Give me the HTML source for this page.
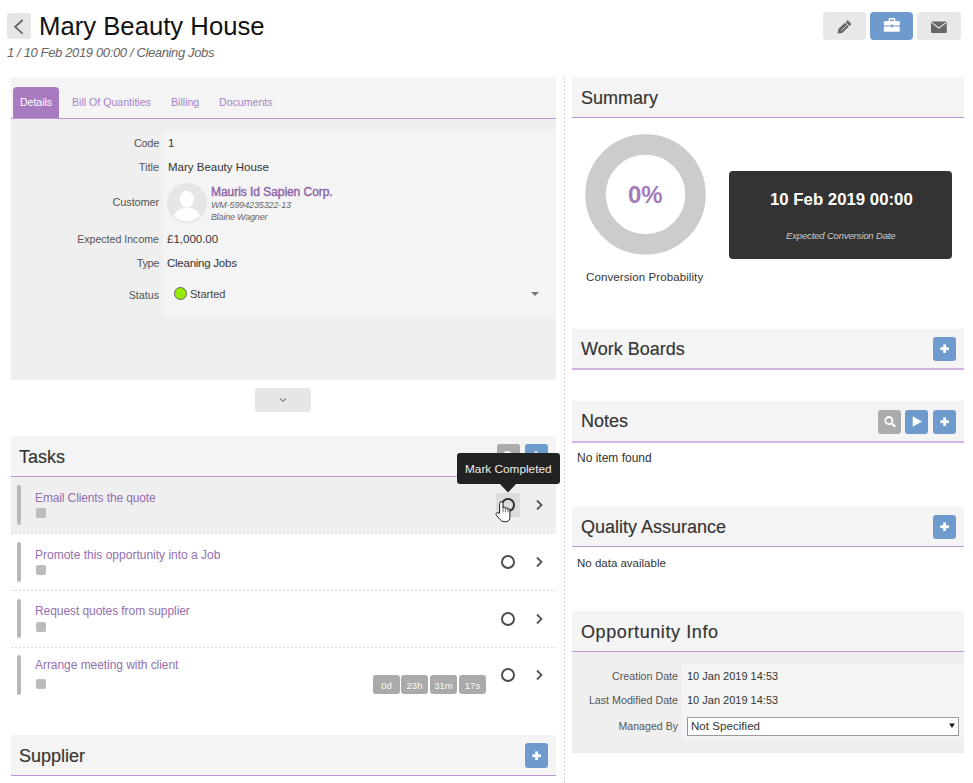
<!DOCTYPE html>
<html><head><meta charset="utf-8">
<style>
*{box-sizing:border-box;margin:0;padding:0}
html,body{width:973px;height:783px;overflow:hidden;background:#fff;font-family:"Liberation Sans",sans-serif;color:#333}
.a{position:absolute}
.t{position:absolute;white-space:nowrap;line-height:1}
.btn{position:absolute;border-radius:4px;background:#e8e8e8}
.blue{background:#6f9acd}
.gray{background:#ababab}
.hb{position:absolute;background:#f4f4f4}
.ul{position:absolute;height:1px;background:#bd95d3}
.ht{font-size:18px;color:#333;-webkit-text-stroke:0.15px #333}
.lbl{font-size:11px;color:#555;text-align:right}
.val{font-size:11.5px;color:#333}
.task{font-size:12px;color:#936eb0}
.bar{position:absolute;left:17px;width:4px;background:#b9b9b9;border-radius:2px}
.sq{position:absolute;left:36px;width:10px;height:10px;background:#bbb;border-radius:2px}
.sep{position:absolute;left:11px;width:545px;height:1px;background:repeating-linear-gradient(90deg,#d8d8d8 0 2px,transparent 2px 4px)}
.circ{position:absolute;width:14px;height:14px;border:2px solid #4e4e4e;border-radius:50%}
.badge{position:absolute;top:675px;height:19px;width:27px;background:#aaa;border-radius:3px;color:#fafafa;font-size:9.5px;text-align:center;line-height:21px}
</style></head><body>

<!-- header -->
<div class="btn" style="left:7px;top:13px;width:24px;height:26px;border-radius:3px;background:#e6e6e6"></div>
<svg class="a" style="left:7px;top:13px" width="24" height="26"><path d="M15.6 7 L8.2 13.8 L15.6 20.6" fill="none" stroke="#666" stroke-width="1.8"/></svg>
<div class="t" style="left:39px;top:14px;font-size:25.7px;color:#111">Mary Beauty House</div>
<div class="t" style="left:7px;top:46px;font-size:13px;font-style:italic;color:#666;letter-spacing:-0.36px">1 / 10 Feb 2019 00:00 / Cleaning Jobs</div>

<div class="btn" style="left:823px;top:12px;width:43px;height:28px"></div>
<svg class="a" style="left:823px;top:12px" width="43" height="28"><g transform="translate(14.6,21.4) rotate(-43)"><path d="M0 0 L3.6 -2.8 L12.6 -2.8 L12.6 2.8 L3.6 2.8 Z" fill="#666"/><rect x="13.5" y="-2.8" width="3" height="5.6" rx="0.6" fill="#666"/><line x1="4.2" y1="0.4" x2="12" y2="0.4" stroke="#e8e8e8" stroke-width="0.7"/></g></svg>
<div class="btn blue" style="left:870px;top:12px;width:43px;height:28px"></div>
<svg class="a" style="left:870px;top:12px" width="43" height="28"><path d="M18.6 9 L18.6 7 Q18.6 6 19.6 6 L24.2 6 Q25.2 6 25.2 7 L25.2 9 L23.8 9 L23.8 7.4 L20 7.4 L20 9 Z" fill="#fff"/><rect x="13.8" y="9" width="16" height="4.6" rx="1" fill="#fff"/><rect x="13.8" y="14.6" width="16" height="5.2" rx="0.8" fill="#fff"/><rect x="20.8" y="12.6" width="2.2" height="2.6" fill="#6f9acd"/></svg>
<div class="btn" style="left:917px;top:12px;width:44px;height:28px"></div>
<svg class="a" style="left:917px;top:12px" width="44" height="28"><rect x="14" y="9.4" width="15.8" height="11.6" rx="1.2" fill="#666"/><path d="M14.4 10.4 L21.9 16 L29.4 10.4" fill="none" stroke="#e8e8e8" stroke-width="1.1"/></svg>

<!-- left details panel -->
<div class="a" style="left:11px;top:77px;width:545px;height:303px;background:#efefef"></div>
<div class="a" style="left:11px;top:77px;width:545px;height:41px;background:#f4f4f4"></div>
<div class="ul" style="left:11px;top:118px;width:545px"></div>
<div class="a" style="left:13px;top:87px;width:46px;height:31px;background:#a87bc0;border-radius:4px 4px 0 0"></div>
<div class="t" style="left:20px;top:97px;font-size:10.5px;color:#fff">Details</div>
<div class="t" style="left:72px;top:97px;font-size:10.6px;color:#a683c6">Bill Of Quantities</div>
<div class="t" style="left:171px;top:97px;font-size:10.6px;color:#a683c6">Billing</div>
<div class="t" style="left:219px;top:97px;font-size:10.6px;color:#a683c6">Documents</div>

<div class="a" style="left:163px;top:131px;width:393px;height:186px;background:#f4f4f4"></div>
<div class="t lbl" style="left:0;width:159px;top:138px;letter-spacing:-0.3px">Code</div>
<div class="t lbl" style="left:0;width:159px;top:162px">Title</div>
<div class="t lbl" style="left:0;width:159px;top:197px;letter-spacing:-0.15px">Customer</div>
<div class="t lbl" style="left:0;width:159px;top:234px;font-size:10.6px">Expected Income</div>
<div class="t lbl" style="left:0;width:159px;top:258px;letter-spacing:-0.4px">Type</div>
<div class="t lbl" style="left:0;width:159px;top:290px;font-size:10.7px">Status</div>

<div class="t val" style="left:168px;top:138px">1</div>
<div class="t val" style="left:168px;top:162px">Mary Beauty House</div>
<div class="a" style="left:167px;top:183px;width:40px;height:40px;border-radius:50%;background:#e6e6e6"></div>
<svg class="a" style="left:167px;top:183px" width="40" height="40"><ellipse cx="19.8" cy="16.2" rx="7" ry="8.4" fill="#fff"/><path d="M6.5 32.8 Q10.5 24.8 19.8 24.8 Q29.5 24.8 33.2 32.8 Q27.5 38.5 19.8 38.5 Q12 38.5 6.5 32.8Z" fill="#fff"/></svg>
<div class="t" style="left:211px;top:186px;font-size:12px;color:#8d64a8;-webkit-text-stroke:0.4px #8d64a8;letter-spacing:-0.05px">Mauris Id Sapien Corp.</div>
<div class="t" style="left:211px;top:201px;font-size:9px;font-style:italic;color:#666;letter-spacing:-0.13px">WM-5994235322-13</div>
<div class="t" style="left:211px;top:213px;font-size:9px;font-style:italic;color:#666;letter-spacing:-0.2px">Blaine Wagner</div>
<div class="t val" style="left:167px;top:234px">£1,000.00</div>
<div class="t val" style="left:167px;top:258px;letter-spacing:-0.25px">Cleaning Jobs</div>
<div class="a" style="left:174px;top:287px;width:13px;height:13px;border-radius:50%;background:#98e80a;border:1px solid #666"></div>
<div class="t" style="left:190px;top:289px;font-size:11px;color:#444">Started</div>
<svg class="a" style="left:531px;top:292px" width="9" height="5"><path d="M0 0 L8 0 L4 4Z" fill="#777"/></svg>
<div class="a" style="left:11px;top:330px;width:545px;height:1px;background:#ececec"></div>
<div class="a" style="left:11px;top:355px;width:545px;height:1px;background:#ececec"></div>

<div class="btn" style="left:255px;top:388px;width:56px;height:24px;border-radius:3px;background:#e6e6e6"></div>
<svg class="a" style="left:279px;top:397px" width="8" height="6"><path d="M1 1.5 L4 4.2 L7 1.5" fill="none" stroke="#888" stroke-width="1.1"/></svg>

<!-- tasks -->
<div class="hb" style="left:11px;top:436px;width:545px;height:40px"></div>
<div class="ul" style="left:11px;top:476px;width:545px"></div>
<div class="t ht" style="left:19px;top:448px">Tasks</div>
<div class="btn gray" style="left:497px;top:444px;width:23px;height:24px;border-radius:3px"></div>
<div class="btn blue" style="left:525px;top:444px;width:23px;height:24px;border-radius:3px"></div>

<div class="a" style="left:11px;top:477px;width:545px;height:56px;background:#efefef"></div>
<div class="sep" style="top:533px"></div>
<div class="sep" style="top:590px"></div>
<div class="sep" style="top:647px"></div>

<div class="bar" style="top:485px;height:40px"></div>
<div class="t task" style="left:35px;top:492px;letter-spacing:-0.12px">Email Clients the quote</div>
<div class="sq" style="top:508px"></div>
<div class="bar" style="top:542px;height:40px"></div>
<div class="t task" style="left:35px;top:549px">Promote this opportunity into a Job</div>
<div class="sq" style="top:565px"></div>
<div class="bar" style="top:599px;height:39px"></div>
<div class="t task" style="left:35px;top:605px;letter-spacing:-0.07px">Request quotes from supplier</div>
<div class="sq" style="top:622px"></div>
<div class="bar" style="top:655px;height:40px"></div>
<div class="t task" style="left:35px;top:659px;letter-spacing:-0.05px">Arrange meeting with client</div>
<div class="sq" style="top:679px"></div>

<div class="a" style="left:496px;top:493px;width:24px;height:24px;background:#dcdcdc"></div>
<div class="circ" style="left:501px;top:498px;border-color:#333;width:13.5px;height:13.5px"></div>
<div class="circ" style="left:501px;top:555px"></div>
<div class="circ" style="left:501px;top:612px"></div>
<div class="circ" style="left:501px;top:668px"></div>
<svg class="a" style="left:535px;top:499px" width="10" height="12"><path d="M2 1.5 L6.5 6 L2 10.5" fill="none" stroke="#555" stroke-width="1.8"/></svg>
<svg class="a" style="left:535px;top:556px" width="10" height="12"><path d="M2 1.5 L6.5 6 L2 10.5" fill="none" stroke="#555" stroke-width="1.8"/></svg>
<svg class="a" style="left:535px;top:613px" width="10" height="12"><path d="M2 1.5 L6.5 6 L2 10.5" fill="none" stroke="#555" stroke-width="1.8"/></svg>
<svg class="a" style="left:535px;top:669px" width="10" height="12"><path d="M2 1.5 L6.5 6 L2 10.5" fill="none" stroke="#555" stroke-width="1.8"/></svg>
<svg class="a" style="left:495px;top:501px" width="18" height="23"><path d="M4.6 12.2 L4.6 2.5 Q4.6 0.8 6.3 0.8 Q8 0.8 8 2.5 L8 7.2 Q8.2 6.2 9.2 6.2 Q10.4 6.2 10.4 7.4 L10.4 7.8 Q10.6 6.9 11.7 6.9 Q12.8 6.9 12.9 8 L12.9 8.6 Q13.1 7.8 14 7.8 Q14.9 7.8 14.9 9 L14.9 16.5 Q14.9 19.5 12.5 20.4 Q10 21.1 8 20.5 Q6.5 20.1 5.2 18.6 L1.3 14.2 Q0.5 13.2 1.2 12.3 Q2 11.4 3.2 12 Z" fill="#fff" stroke="#1e1e1e" stroke-width="1"/><path d="M8 7.5 L8 11.2 M10.4 8 L10.4 11.2 M12.9 8.6 L12.9 11.2" stroke="#333" stroke-width="0.7"/></svg>

<div class="badge" style="left:373px">0d</div>
<div class="badge" style="left:401px">23h</div>
<div class="badge" style="left:430px">31m</div>
<div class="badge" style="left:459px">17s</div>

<svg class="a" style="left:490px;top:440px" width="66" height="14"><circle cx="17.5" cy="16" r="4.2" fill="none" stroke="#fff" stroke-width="1.8"/><rect x="44.6" y="11.6" width="2.8" height="4" fill="#fff"/></svg>
<!-- tooltip -->
<div class="a" style="left:457px;top:453px;width:103px;height:31px;background:#222;border-radius:3px"></div>
<svg class="a" style="left:500px;top:484px" width="16" height="9"><path d="M0 0 L16 0 L8 8.5Z" fill="#222"/></svg>
<div class="t" style="left:465px;top:464px;font-size:11.8px;color:#eee">Mark Completed</div>

<!-- supplier -->
<div class="hb" style="left:11px;top:735px;width:545px;height:40px"></div>
<div class="ul" style="left:11px;top:775px;width:545px"></div>
<div class="t ht" style="left:19px;top:747px">Supplier</div>
<div class="btn blue" style="left:525px;top:743px;width:23px;height:25px;border-radius:3px"></div>

<!-- divider -->
<div class="a" style="left:564px;top:77px;width:1px;height:706px;background:repeating-linear-gradient(180deg,#d2d2d2 0 2px,transparent 2px 4px)"></div>

<!-- right column -->
<div class="hb" style="left:572px;top:77px;width:392px;height:40px"></div>
<div class="ul" style="left:572px;top:117px;width:392px"></div>
<div class="t ht" style="left:581px;top:89px">Summary</div>
<svg class="a" style="left:585px;top:134px" width="121" height="121"><circle cx="60.5" cy="60.5" r="50" fill="none" stroke="#cccccc" stroke-width="20.5"/></svg>
<div class="t" style="left:628px;top:183px;font-size:24px;font-weight:bold;color:#a47bbd">0%</div>
<div class="t" style="left:586px;top:272px;font-size:11.5px;color:#333;letter-spacing:0.1px">Conversion Probability</div>
<div class="a" style="left:729px;top:171px;width:223px;height:88px;background:#333;border-radius:4px"></div>
<div class="t" style="left:770px;top:192px;font-size:16.8px;font-weight:bold;color:#fff">10 Feb 2019 00:00</div>
<div class="t" style="left:786px;top:231px;font-size:9.5px;font-style:italic;color:#ccc;letter-spacing:-0.15px">Expected Conversion Date</div>

<div class="hb" style="left:572px;top:329px;width:392px;height:39px"></div>
<div class="ul" style="left:572px;top:368px;width:392px;height:2px;background:#d2b6e0"></div>
<div class="t ht" style="left:581px;top:340px">Work Boards</div>
<div class="btn blue" style="left:933px;top:337px;width:23px;height:24px;border-radius:3px"></div>

<div class="hb" style="left:572px;top:401px;width:392px;height:40px"></div>
<div class="ul" style="left:572px;top:441px;width:392px;height:2px;background:#d2b6e0"></div>
<div class="t ht" style="left:581px;top:412px">Notes</div>
<div class="btn gray" style="left:878px;top:410px;width:23px;height:24px;border-radius:3px"></div>
<div class="btn blue" style="left:905px;top:410px;width:23px;height:24px;border-radius:3px"></div>
<div class="btn blue" style="left:933px;top:410px;width:23px;height:24px;border-radius:3px"></div>
<div class="t" style="left:577px;top:452px;font-size:12px;color:#333">No item found</div>

<div class="hb" style="left:572px;top:506px;width:392px;height:40px"></div>
<div class="ul" style="left:572px;top:546px;width:392px"></div>
<div class="t ht" style="left:581px;top:518px">Quality Assurance</div>
<div class="btn blue" style="left:933px;top:515px;width:23px;height:24px;border-radius:3px"></div>
<div class="t" style="left:577px;top:558px;font-size:11.5px;color:#333">No data available</div>

<div class="hb" style="left:572px;top:611px;width:392px;height:40px"></div>
<div class="ul" style="left:572px;top:651px;width:392px"></div>
<div class="t ht" style="left:581px;top:623px;letter-spacing:0.6px">Opportunity Info</div>
<div class="a" style="left:572px;top:652px;width:392px;height:101px;background:#efefef"></div>
<div class="a" style="left:682px;top:664px;width:282px;height:75px;background:#f4f4f4"></div>
<div class="t lbl" style="left:572px;width:106px;top:671px;font-size:10.7px">Creation Date</div>
<div class="t lbl" style="left:572px;width:106px;top:695px;font-size:10.7px">Last Modified Date</div>
<div class="t lbl" style="left:572px;width:106px;top:721px;font-size:10.6px">Managed By</div>
<div class="t val" style="left:687px;top:671px;font-size:11px">10 Jan 2019 14:53</div>
<div class="t val" style="left:687px;top:695px;font-size:11px">10 Jan 2019 14:53</div>
<div class="a" style="left:687px;top:717px;width:272px;height:19px;background:#fff;border:1px solid #999"></div>
<div class="t val" style="left:691px;top:721px;font-size:11.5px;letter-spacing:0.05px">Not Specified</div>
<svg class="a" style="left:948.5px;top:723px" width="6" height="6"><path d="M0.2 0.5 L5.8 0.5 L3 5Z" fill="#111"/></svg>

<!-- button icons -->
<svg class="a" style="left:0;top:0" width="973" height="783">
 <g fill="#fff">
  <rect x="940.3" y="347.3" width="8.6" height="2.8"/><rect x="943.2" y="344.4" width="2.8" height="8.6"/>
  <rect x="940.3" y="420.3" width="8.6" height="2.8"/><rect x="943.2" y="417.4" width="2.8" height="8.6"/>
  <rect x="940.3" y="525.3" width="8.6" height="2.8"/><rect x="943.2" y="522.4" width="2.8" height="8.6"/>
  <rect x="532.3" y="754.3" width="8.6" height="2.8"/><rect x="535.2" y="751.4" width="2.8" height="8.6"/>
  <path d="M912.7 416.3 L912.7 426.7 L922 421.5Z"/>
 </g>
 <circle cx="888.9" cy="420.6" r="3.6" fill="none" stroke="#fff" stroke-width="1.8"/>
 <path d="M891.5 423.3 L895.2 426.8" stroke="#fff" stroke-width="2.2"/>
</svg>

</body></html>
